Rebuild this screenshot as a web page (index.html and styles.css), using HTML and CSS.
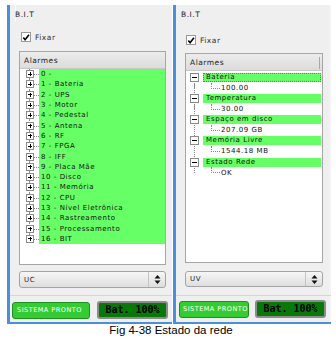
FILE: index.html
```html
<!DOCTYPE html>
<html lang="pt">
<head>
<meta charset="UTF-8">
<title>Estado da rede</title>
<link rel="stylesheet" href="styles.css">
</head>
<body>
<div class="panels">
  <!-- painel UC: lista de alarmes -->
  <section class="panel panel-uc">
    <div class="tab">B.I.T</div>
    <label class="fixar">
      <span class="check"><svg width="9" height="9" viewBox="0 0 9 9"><path d="M1.5 4.5 L3.5 7 L7.8 1.5" fill="none" stroke="#000" stroke-width="1.8"/></svg></span>
      Fixar
    </label>
    <div class="alarms">
      <div class="alarms-head">Alarmes</div>
      <ul class="tree flat">
        <li><span class="exp"></span><span class="lbl">0 -</span></li>
        <li><span class="exp"></span><span class="lbl">1 - Bateria</span></li>
        <li><span class="exp"></span><span class="lbl">2 - UPS</span></li>
        <li><span class="exp"></span><span class="lbl">3 - Motor</span></li>
        <li><span class="exp"></span><span class="lbl">4 - Pedestal</span></li>
        <li><span class="exp"></span><span class="lbl">5 - Antena</span></li>
        <li><span class="exp"></span><span class="lbl">6 - RF</span></li>
        <li><span class="exp"></span><span class="lbl">7 - FPGA</span></li>
        <li><span class="exp"></span><span class="lbl">8 - IFF</span></li>
        <li><span class="exp"></span><span class="lbl">9 - Placa Mãe</span></li>
        <li><span class="exp"></span><span class="lbl">10 - Disco</span></li>
        <li><span class="exp"></span><span class="lbl">11 - Memória</span></li>
        <li><span class="exp"></span><span class="lbl">12 - CPU</span></li>
        <li><span class="exp"></span><span class="lbl">13 - Nível Eletrônica</span></li>
        <li><span class="exp"></span><span class="lbl">14 - Rastreamento</span></li>
        <li><span class="exp"></span><span class="lbl">15 - Processamento</span></li>
        <li class="last"><span class="exp"></span><span class="lbl">16 - BIT</span></li>
      </ul>
    </div>
    <div class="combo">
      <span class="combo-text">UC</span>
      <span class="spin"><svg width="7" height="9" viewBox="0 0 7 9"><path d="M3.5 0 L6.5 3.5 L0.5 3.5 Z M3.5 9 L6.5 5.5 L0.5 5.5 Z" fill="#111"/></svg></span>
    </div>
    <div class="sep"></div>
    <div class="status">
      <span class="ready">SISTEMA PRONTO</span>
      <span class="bat">Bat. 100%</span>
    </div>
  </section>

  <!-- painel UV: estado da rede -->
  <section class="panel panel-uv">
    <div class="tab">B.I.T</div>
    <label class="fixar">
      <span class="check"><svg width="9" height="9" viewBox="0 0 9 9"><path d="M1.5 4.5 L3.5 7 L7.8 1.5" fill="none" stroke="#000" stroke-width="1.8"/></svg></span>
      Fixar
    </label>
    <div class="alarms">
      <div class="alarms-head">Alarmes<span class="col-edge"></span></div>
      <ul class="tree nested">
        <li class="node focus"><span class="exp minus"></span><span class="lbl">Bateria</span></li>
        <li class="leaf"><span class="lbl">100.00</span></li>
        <li class="node"><span class="exp minus"></span><span class="lbl">Temperatura</span></li>
        <li class="leaf"><span class="lbl">30.00</span></li>
        <li class="node"><span class="exp minus"></span><span class="lbl">Espaço em disco</span></li>
        <li class="leaf"><span class="lbl">207.09 GB</span></li>
        <li class="node"><span class="exp minus"></span><span class="lbl">Memória Livre</span></li>
        <li class="leaf"><span class="lbl">1544.18 MB</span></li>
        <li class="node"><span class="exp minus"></span><span class="lbl">Estado Rede</span></li>
        <li class="leaf last"><span class="lbl">OK</span></li>
      </ul>
    </div>
    <div class="combo">
      <span class="combo-text">UV</span>
      <span class="spin"><svg width="7" height="9" viewBox="0 0 7 9"><path d="M3.5 0 L6.5 3.5 L0.5 3.5 Z M3.5 9 L6.5 5.5 L0.5 5.5 Z" fill="#111"/></svg></span>
    </div>
    <div class="sep"></div>
    <div class="status">
      <span class="ready">SISTEMA PRONTO</span>
      <span class="bat">Bat. 100%</span>
    </div>
  </section>
</div>
<p class="caption">Fig 4-38 Estado da rede</p>
</body>
</html>
```

FILE: styles.css
```css
body { margin: 0; background: #fff; font-family: "DejaVu Sans", sans-serif; font-size: 7px; color: #111; }
.panels { display: flex; gap: 1px; padding: 5px 0 0 7px; }
.panel { display: flex; flex-direction: column; background: #efefef; border-left: 3px solid #4a8fdc; border-bottom: 2px solid #4a8fdc; padding-bottom: 3px; box-sizing: border-box; }
.panel-uc { width: 165px; }
.panel-uv { width: 158px; box-shadow: inset -2px 0 0 #f4f4f4; }

.tab { height: 17px; line-height: 20px; padding-left: 5px; letter-spacing: 0.5px; color: #222; font-size: 7.5px; }
.panel-uc .tab { border-right: 1px solid #fafafa; width: 0; white-space: nowrap; }

.fixar { display: flex; align-items: center; gap: 4px; height: 10px; letter-spacing: 0.5px; color: #333; font-size: 7.5px; }
.panel-uc .fixar { margin: 10px 0 0 11px; }
.panel-uv .fixar { margin: 13px 0 0 10px; }
.check { width: 8px; height: 8px; background: #fff; border: 1px solid #9a9a9a; display: flex; align-items: center; justify-content: center; }
.check svg { display: block; }

.alarms { background: #fff; border: 1px solid #a6a6a6; box-sizing: border-box; }
.panel-uc .alarms { margin: 9px 0 0 9px; width: 147px; height: 214px; }
.panel-uv .alarms { margin: 8px 0 0 9px; width: 138px; height: 210px; }
.alarms-head { position: relative; height: 16px; line-height: 17px; padding-left: 4px; background: linear-gradient(#ececec, #dcdcdc); border-bottom: 1px solid #c8c8c8; letter-spacing: 0.5px; color: #222; font-size: 7.5px; }
.col-edge { position: absolute; right: 2px; top: 3px; width: 1px; height: 12px; background: #a8a8a8; }

.tree { list-style: none; margin: 0; padding: 0; letter-spacing: 0.55px; }
.tree li { position: relative; display: flex; align-items: center; }

/* lista plana com +, faixa verde continua */
.flat li { height: 10.3px; }
.flat li::before { content: ""; position: absolute; left: 9px; top: 0; bottom: 0; border-left: 1px dotted #8a8a8a; }
.flat li.last::before { bottom: 50%; }
.flat .exp { position: relative; z-index: 1; width: 6px; height: 6px; margin-left: 6px; border: 1px solid #8a8a8a; background: #fff; }
.flat .exp::before { content: ""; position: absolute; left: 1px; top: 2.5px; width: 4px; height: 1px; background: #000; }
.flat .exp::after { content: ""; position: absolute; left: 2.5px; top: 1px; width: 1px; height: 4px; background: #000; }
.flat .lbl { flex: 1; align-self: stretch; display: flex; align-items: center; margin-left: 5px; padding-left: 2px; background: #66ff66; position: relative; }
.flat .lbl::before { content: ""; position: absolute; left: -5px; top: 50%; width: 5px; border-top: 1px dotted #8a8a8a; }

/* arvore com nos abertos */
.nested { padding-top: 1px; }
.nested li { height: 10.6px; }
.nested .node .lbl { flex: 1; height: 9px; line-height: 9px; margin: 0 1px 0 4px; padding-left: 3px; background: #66ff66; }
.nested .focus .lbl { outline: 1px dotted #777; outline-offset: -1px; }
.nested .node::after { content: ""; position: absolute; left: 8px; top: 50%; height: 10.6px; border-left: 1px dotted #8a8a8a; }
.nested .minus { position: relative; z-index: 1; width: 7px; height: 7px; margin-left: 4px; border: 1px solid #8a8a8a; background: #fff; }
.nested .minus::before { content: ""; position: absolute; left: 1px; top: 3px; width: 5px; height: 1px; background: #000; }
.nested .leaf { padding-left: 35px; }
.nested .leaf::before { content: ""; position: absolute; left: 25px; top: 0; width: 8px; height: 5px; border-left: 1px dotted #8a8a8a; border-bottom: 1px dotted #8a8a8a; }
.nested .leaf::after { content: ""; position: absolute; left: 8px; top: 0; bottom: 0; border-left: 1px dotted #8a8a8a; }
.nested .leaf.last::after { display: none; }

.combo { display: flex; align-items: center; background: linear-gradient(#f6f6f6, #dedede); border: 1px solid #a4a4a4; border-radius: 3px; box-sizing: border-box; }
.panel-uc .combo { margin: 6px 0 0 9px; width: 147px; height: 17px; }
.panel-uv .combo { margin: 8px 0 0 9px; width: 138px; height: 16px; }
.combo-text { flex: 1; padding-left: 4px; letter-spacing: 0.6px; color: #222; }
.spin { width: 16px; align-self: stretch; display: flex; align-items: center; justify-content: center; border-left: 1px solid #c4c4c4; }

.sep { height: 1px; background: #d6d6d6; }
.panel-uc .sep { margin-top: 7px; }
.panel-uv .sep { margin-top: 8px; }

.status { display: flex; align-items: center; }
.panel-uc .status { margin: 5px 0 0 2px; gap: 7px; }
.panel-uv .status { margin: 4px 0 0 3px; gap: 6px; }
.ready { height: 15px; line-height: 15px; padding: 0 4px; background: #33cc33; border: 1px solid #1f8f1f; border-radius: 3px; color: #fff; font-size: 6.5px; letter-spacing: 0.5px; white-space: nowrap; }
.panel-uc .ready { width: 68px; }
.panel-uv .ready { width: 62px; padding: 0 3px; }
.bat { width: 67px; height: 14px; line-height: 14px; text-align: center; background: #087808; border: 2px solid #8c8c8c; border-radius: 3px; font-family: "DejaVu Sans Mono", monospace; font-weight: bold; font-size: 10px; color: #000; white-space: nowrap; }

.caption { margin: 0; text-align: center; font-family: "Liberation Sans", Arial, sans-serif; font-size: 11.5px; line-height: 13px; color: #000; padding-left: 6px; }
```
